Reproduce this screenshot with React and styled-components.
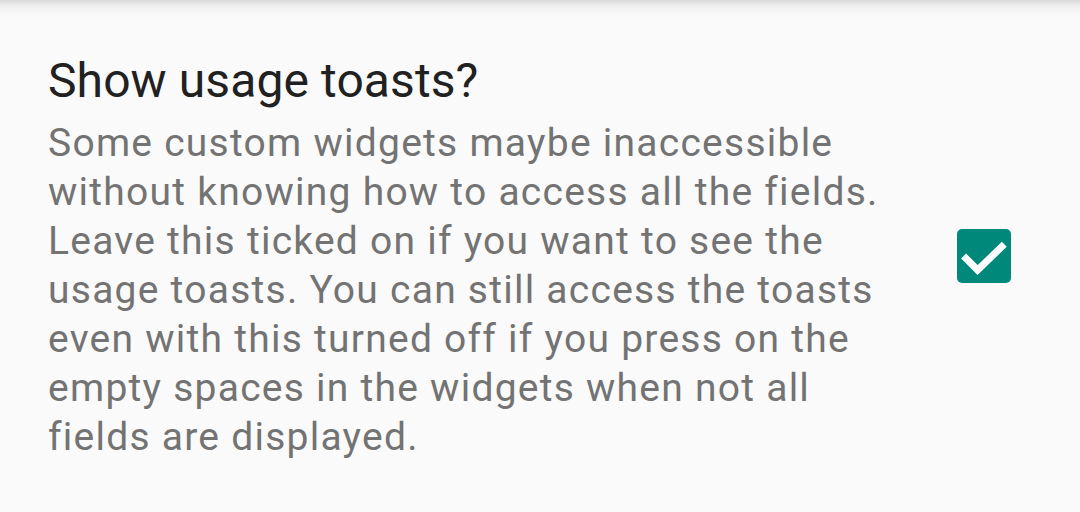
import React from "react";
import styled, { createGlobalStyle } from "styled-components";

const Global = createGlobalStyle`
  html, body { margin: 0; padding: 0; background: #fafafa; }
  body { font-family: Roboto, "Noto Sans", sans-serif; }
`;

const Screen = styled.div`
  position: relative;
  width: 1080px;
  height: 512px;
  background: #fafafa;
  overflow: hidden;
`;

const TopShadow = styled.div`
  position: absolute;
  top: 0;
  left: 0;
  right: 0;
  height: 16px;
  background: linear-gradient(to bottom, rgba(0,0,0,0.13), rgba(0,0,0,0.04) 40%, rgba(0,0,0,0));
`;

const Row = styled.div`
  display: flex;
  align-items: center;
  height: 512px;
  padding: 0 69px 0 48px;
  box-sizing: border-box;
`;

const TextCol = styled.div`
  flex: 1;
  display: flex;
  flex-direction: column;
  padding-top: 3px;
`;

const Title = styled.div`
  font-size: 48px;
  line-height: 56px;
  color: #212121;
  letter-spacing: 0.1px;
  margin-bottom: 10px;
`;

const Summary = styled.div`
  font-size: 39px;
  line-height: 49px;
  color: #737373;
  letter-spacing: 1.25px;
  white-space: nowrap;
`;

const Box = styled.div`
  width: 54px;
  height: 54px;
  flex-shrink: 0;
  display: flex;
`;

const lines = [
  "Some custom widgets maybe inaccessible",
  "without knowing how to access all the fields.",
  "Leave this ticked on if you want to see the",
  "usage toasts. You can still access the toasts",
  "even with this turned off if you press on the",
  "empty spaces in the widgets when not all",
  "fields are displayed.",
];

export default function App() {
  return (
    <Screen>
      <Global />
      <TopShadow />
      <Row>
        <TextCol>
          <Title>Show usage toasts?</Title>
          <Summary>
            {lines.map((l, i) => (
              <React.Fragment key={i}>
                {l}
                {i < lines.length - 1 && <br />}
              </React.Fragment>
            ))}
          </Summary>
        </TextCol>
        <Box>
          <svg width="54" height="54" viewBox="0 0 54 54">
            <rect x="0" y="0" width="54" height="54" rx="5" fill="#00897b" />
            <path d="M6.6 27 L20.6 41 L47.3 15.3" fill="none" stroke="#fff" strokeWidth="7" strokeLinejoin="miter" />
          </svg>
        </Box>
      </Row>
    </Screen>
  );
}
